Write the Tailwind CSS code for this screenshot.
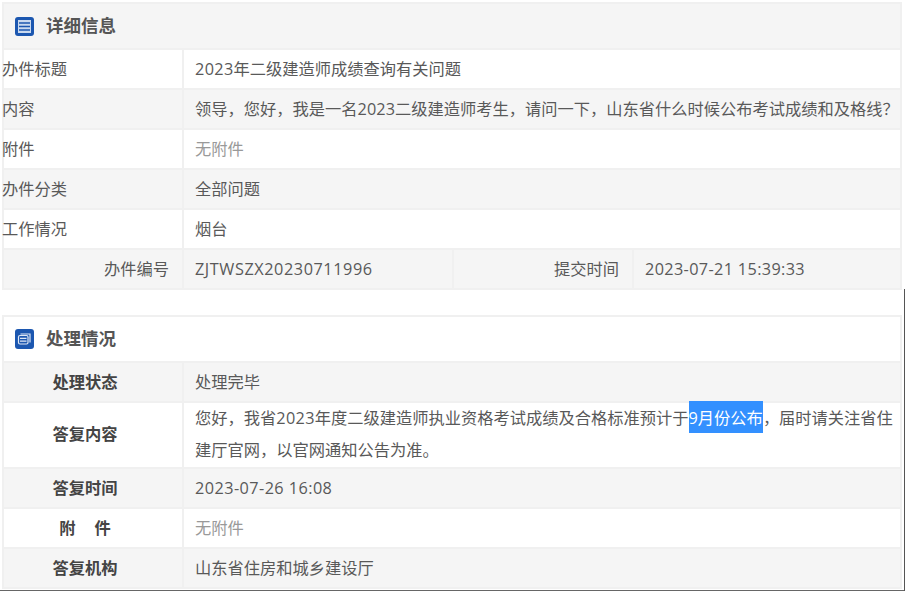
<!DOCTYPE html>
<html lang="zh"><head><meta charset="utf-8"><script src="https://cdn.jsdelivr.net/npm/@tailwindcss/browser@4"></script></head>
<body class="bg-white">
<div class="relative w-[905px] h-[591px] overflow-hidden pt-[2px] pl-[2px] font-['Open_Sans','Noto_Sans_CJK_SC',sans-serif] text-[16.25px] text-[#595959]">
  <section class="w-[900px] border-2 border-[#f0f0f0]">
    <div class="h-[44px] bg-[#f5f5f5] flex items-center pl-[11px] gap-[12px] font-bold text-[17.5px] text-[#555]">
      <svg class="w-[19px] h-[19px]" viewBox="0 0 19 19"><rect width="19" height="19" rx="3" fill="#1c57b0"/><rect x="3" y="3" width="13" height="13" fill="#c9d9ef"/><path d="M4 6h11M4 9.500h11M4 13h11" stroke="#1c57b0" stroke-width="1.500"/></svg>
      <span class="pb-[2px]">详细信息</span>
    </div>
    <div class="grid grid-cols-[178px_1fr] border-t-2 border-[#f0f0f0] h-[40px] bg-white"><div class="flex items-center -ml-[2px]">办件标题</div><div class="flex items-center border-l-2 border-[#f0f0f0] pl-[11px]"><span class="tracking-[0.35px]">2023</span>年二级建造师成绩查询有关问题</div></div>
    <div class="grid grid-cols-[178px_1fr] border-t-2 border-[#f0f0f0] h-[40px] bg-[#f5f5f5]"><div class="flex items-center -ml-[2px]">内容</div><div class="flex items-center border-l-2 border-[#f0f0f0] pl-[11px] whitespace-nowrap">领导，您好，我是一名<span class="tracking-[0.1px]">2023</span>二级建造师考生，请问一下，山东省什么时候公布考试成绩和及格线？</div></div>
    <div class="grid grid-cols-[178px_1fr] border-t-2 border-[#f0f0f0] h-[40px] bg-white"><div class="flex items-center -ml-[2px]">附件</div><div class="flex items-center border-l-2 border-[#f0f0f0] pl-[11px] text-[#999]">无附件</div></div>
    <div class="grid grid-cols-[178px_1fr] border-t-2 border-[#f0f0f0] h-[40px] bg-[#f5f5f5]"><div class="flex items-center -ml-[2px]">办件分类</div><div class="flex items-center border-l-2 border-[#f0f0f0] pl-[11px]">全部问题</div></div>
    <div class="grid grid-cols-[178px_1fr] border-t-2 border-[#f0f0f0] h-[40px] bg-white"><div class="flex items-center -ml-[2px]">工作情况</div><div class="flex items-center border-l-2 border-[#f0f0f0] pl-[11px]">烟台</div></div>
    <div class="grid grid-cols-[178px_270px_180px_1fr] border-t-2 border-[#f0f0f0] h-[40px] bg-[#f5f5f5]">
      <div class="flex items-center justify-end pr-[13px]">办件编号</div>
      <div class="flex items-center border-l-2 border-[#f0f0f0] pl-[11px] tracking-[0.57px]">ZJTWSZX20230711996</div>
      <div class="flex items-center justify-end border-l-2 border-[#f0f0f0] pr-[13px]">提交时间</div>
      <div class="flex items-center border-l-2 border-[#f0f0f0] pl-[11px] tracking-[0.35px]">2023-07-21 15:39:33</div>
    </div>
  </section>
  <section class="w-[900px] mt-[25px] border-2 border-[#f0f0f0]">
    <div class="h-[44px] bg-white flex items-center pl-[11px] gap-[12px] font-bold text-[17.5px] text-[#555]">
      <svg class="w-[19px] h-[20px]" viewBox="0 0 19 20"><rect width="19" height="20" rx="3" fill="#1c57b0"/><path d="M5.500 5h9.500v8.500" fill="none" stroke="#dfe8f5" stroke-width="1.200"/><rect x="3.500" y="6.500" width="9.500" height="8.500" rx="1.500" fill="#1c57b0" stroke="#dfe8f5" stroke-width="1.200"/><path d="M5 9.300h6.500M5 12.200h6.500" stroke="#dfe8f5" stroke-width="1.200"/></svg>
      <span class="pb-[2px]">处理情况</span>
    </div>
    <div class="grid grid-cols-[178px_1fr] border-t-2 border-[#f0f0f0] h-[40px] bg-[#f5f5f5]"><div class="flex items-center justify-center pr-[16px] font-bold text-[#444]">处理状态</div><div class="flex items-center border-l-2 border-[#f0f0f0] pl-[11px]">处理完毕</div></div>
    <div class="grid grid-cols-[178px_1fr] border-t-2 border-[#f0f0f0] h-[66px] bg-white"><div class="flex items-center justify-center pr-[16px] pb-[2px] font-bold text-[#444]">答复内容</div><div class="border-l-2 border-[#f0f0f0] pl-[11px] pr-[6px] leading-[32px]"><div class="-mt-[1px]">您好，我省<span class="tracking-[0.35px]">2023</span>年度二级建造师执业资格考试成绩及合格标准预计于<span class="inline-block align-top -mt-[1px] h-[32px] leading-[34px] bg-[#3390ff] text-white">9月份公布</span>，届时请关注省住建厅官网，以官网通知公告为准。</div></div></div>
    <div class="grid grid-cols-[178px_1fr] border-t-2 border-[#f0f0f0] h-[40px] bg-[#f5f5f5]"><div class="flex items-center justify-center pr-[16px] font-bold text-[#444]">答复时间</div><div class="flex items-center border-l-2 border-[#f0f0f0] pl-[11px] tracking-[0.43px]">2023-07-26 16:08</div></div>
    <div class="grid grid-cols-[178px_1fr] border-t-2 border-[#f0f0f0] h-[40px] bg-white"><div class="flex items-center justify-center gap-[19px] pr-[16px] font-bold text-[#444]"><span>附</span><span>件</span></div><div class="flex items-center border-l-2 border-[#f0f0f0] pl-[11px] text-[#999]">无附件</div></div>
    <div class="grid grid-cols-[178px_1fr] border-t-2 border-[#f0f0f0] h-[40px] bg-[#f5f5f5]"><div class="flex items-center justify-center pr-[16px] font-bold text-[#444]">答复机构</div><div class="flex items-center border-l-2 border-[#f0f0f0] pl-[11px]">山东省住房和城乡建设厅</div></div>
  </section>
  <div class="absolute left-0 bottom-0 w-full h-[1px] bg-[#666]"></div>
  <div class="absolute right-0 top-[289px] bottom-0 w-[1px] bg-[#555]"></div>
</div>
</body></html>
